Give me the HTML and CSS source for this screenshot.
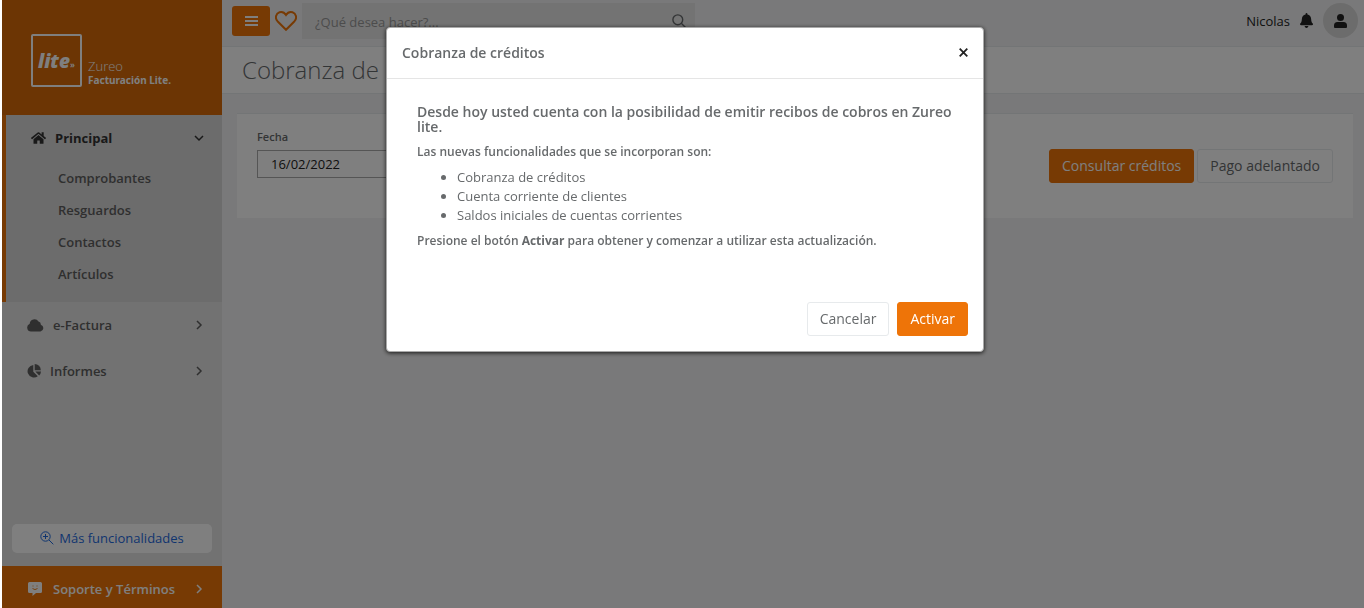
FILE: index.html
```html
<!DOCTYPE html>
<html lang="es">
<head>
    <meta charset="UTF-8">
    <meta name="viewport" content="width=device-width, initial-scale=1.0">
    <title>Cobranza de créditos</title>
    <link rel="stylesheet" href="styles.css">
</head>
<body>
    <div class="wrapper">
        <nav class="sidebar">
            <div class="brand">
                <div class="logo">
                    <span class="logo-name">lite</span><span class="logo-mark">»</span>
                </div>
                <div class="brand-text">
                    <span class="brand-company">Zureo</span>
                    <strong class="brand-product">Facturación Lite.</strong>
                </div>
            </div>

            <div class="menu-active">
                <a href="#" class="menu-link menu-principal">
                    <svg class="icon-home" width="15" height="14" viewBox="0 0 576 512" fill="currentColor"><path d="M280 148 96 300v164c0 9 7 16 16 16h112c9 0 16-7 16-16v-96c0-9 7-16 16-16h64c9 0 16 7 16 16v96c0 9 7 16 16 16h112c9 0 16-7 16-16V300L296 148a12 12 0 0 0-16 0zM572 251l-84-69V44c0-7-5-12-12-12h-56c-7 0-12 5-12 12v73l-89-74a48 48 0 0 0-61 0L4 251c-5 4-6 12-2 17l26 31c4 5 12 6 17 2L280 107c5-4 11-4 16 0l235 194c5 4 13 3 17-2l26-31c4-5 3-13-2-17z"/></svg>
                    <span>Principal</span>
                    <svg class="chevron" width="10" height="10" viewBox="0 0 10 10"><path d="M1 3l4 4 4-4"/></svg>
                </a>
                <ul class="submenu">
                    <li><a href="#">Comprobantes</a></li>
                    <li><a href="#">Resguardos</a></li>
                    <li><a href="#">Contactos</a></li>
                    <li><a href="#">Artículos</a></li>
                </ul>
            </div>

            <a href="#" class="menu-link">
                <svg width="17" height="13" viewBox="0 0 17 13" fill="currentColor"><path d="M4 12.500a4 4 0 0 1-1.300-7.700A4.800 4.800 0 0 1 11.500 2.500a3 3 0 0 1 2.300 3.200A3.500 3.500 0 0 1 13.500 12.500z"/></svg>
                <span>e-Factura</span>
                <svg class="chevron" width="10" height="10" viewBox="0 0 10 10"><path d="M3 1l4 4-4 4"/></svg>
            </a>
            <a href="#" class="menu-link">
                <svg width="14" height="14" viewBox="0 0 14 14" fill="currentColor"><path d="M6.300 1v6.700l4.500 4.500A6.300 6.300 0 1 1 6.300 1z"/><path d="M7.700 0a6.200 6.200 0 0 1 6.100 6.200H7.700z"/><path d="M8.300 7.600H14a6 6 0 0 1-1.800 3.900z"/></svg>
                <span>Informes</span>
                <svg class="chevron" width="10" height="10" viewBox="0 0 10 10"><path d="M3 1l4 4-4 4"/></svg>
            </a>

            <div class="sidebar-bottom">
                <a href="#" class="more-link">
                    <svg width="14" height="14" viewBox="0 0 14 14" fill="none" stroke="currentColor"><circle cx="5.500" cy="5.500" r="4.700"/><path d="M9 9l4.300 4.300M3 5.500h5M5.500 3v5"/></svg>
                    Más funcionalidades
                </a>
                <a href="#" class="menu-link support">
                    <svg width="14" height="14" viewBox="0 0 14 14"><path fill="currentColor" d="M1.500 0h11A1.500 1.500 0 0 1 14 1.500v8a1.500 1.500 0 0 1-1.500 1.500H8l-3.500 3v-3h-3A1.500 1.500 0 0 1 0 9.500v-8A1.500 1.500 0 0 1 1.500 0z"/><path fill="none" stroke="#ee7408" stroke-width=".9" d="M5 3.500v1M9 3.500v1M4.500 6.500q2.500 2.200 5 0"/></svg>
                    <span>Soporte y Términos</span>
                    <svg class="chevron" width="10" height="10" viewBox="0 0 10 10"><path d="M3 1l4 4-4 4"/></svg>
                </a>
            </div>
        </nav>

        <div class="page">
            <header class="topbar">
                <button type="button" class="btn-menu" aria-label="Menú">
                    <svg width="13" height="12" viewBox="0 0 13 12" stroke="currentColor" stroke-width="2"><path d="M0 2h13M0 6h13M0 10h13"/></svg>
                </button>
                <button type="button" class="btn-heart" aria-label="Favoritos">
                    <svg width="22" height="20" viewBox="0 0 22 20" fill="none" stroke="currentColor" stroke-width="2"><path d="M11 18.800 2.500 10.200C-.5 6.800 1 2.500 4.500 1.300 7.500.400 9.700 2 11 4c1.300-2 3.500-3.600 6.500-2.700 3.500 1.200 5 5.500 2 8.900z"/></svg>
                </button>
                <div class="search">
                    <input type="text" placeholder="¿Qué desea hacer?..." aria-label="Buscar">
                    <svg width="14" height="14" viewBox="0 0 14 14" fill="none" stroke="currentColor" stroke-width="1.400"><circle cx="5.800" cy="5.800" r="4.900"/><path d="M9.300 9.300l4.200 4.200"/></svg>
                </div>
                <div class="user">
                    <span>Nicolas</span>
                    <svg class="bell" width="13" height="15" viewBox="0 0 448 512" fill="currentColor"><path d="M224 512c35 0 64-29 64-64H160c0 35 29 64 64 64zm215-150c-19-20-55-52-55-154 0-78-54-140-128-155V32a32 32 0 1 0-64 0v21C118 68 64 130 64 208c0 102-36 134-55 154-6 6-9 14-9 22 0 16 13 32 32 32h384c19 0 32-16 32-32 0-8-3-16-9-22z"/></svg>
                    <a href="#" class="avatar" aria-label="Perfil">
                        <svg width="13" height="14" viewBox="0 0 13 14" fill="currentColor"><circle cx="6.500" cy="3.500" r="3.500"/><path d="M3.500 8h6A3.500 3.500 0 0 1 13 11.500V13a1 1 0 0 1-1 1H1a1 1 0 0 1-1-1v-1.500A3.500 3.500 0 0 1 3.500 8z"/></svg>
                    </a>
                </div>
            </header>

            <div class="heading">
                <h1>Cobranza de créditos</h1>
            </div>

            <main class="card">
                <div class="field">
                    <label for="fecha">Fecha</label>
                    <input type="text" id="fecha" value="16/02/2022">
                </div>
                <div class="card-actions">
                    <button type="button" class="btn btn-primary">Consultar créditos</button>
                    <button type="button" class="btn btn-white">Pago adelantado</button>
                </div>
            </main>
        </div>
    </div>

    <div class="backdrop">
        <div class="modal" role="dialog" aria-labelledby="modalTitle">
            <div class="modal-header">
                <h2 id="modalTitle">Cobranza de créditos</h2>
                <button type="button" class="close" aria-label="Cerrar">
                    <svg width="9" height="9" viewBox="0 0 9 9" stroke="currentColor" stroke-width="1.800"><path d="M.7.700l7.600 7.600M8.300.700L.7 8.300"/></svg>
                </button>
            </div>
            <div class="modal-body">
                <h3>Desde hoy usted cuenta con la posibilidad de emitir recibos de cobros en Zureo lite.</h3>
                <p>Las nuevas funcionalidades que se incorporan son:</p>
                <ul>
                    <li>Cobranza de créditos</li>
                    <li>Cuenta corriente de clientes</li>
                    <li>Saldos iniciales de cuentas corrientes</li>
                </ul>
                <p>Presione el botón <strong>Activar</strong> para obtener y comenzar a utilizar esta actualización.</p>
            </div>
            <div class="modal-footer">
                <button type="button" class="btn btn-white">Cancelar</button>
                <button type="button" class="btn btn-primary">Activar</button>
            </div>
        </div>
    </div>
</body>
</html>
```
FILE: styles.css
```css
* {
    box-sizing: border-box;
}
body {
    margin: 0;
    font-family: "Open Sans", sans-serif;
    font-size: 13px;
    color: #676a6c;
    background: #fff;
}
a {
    color: inherit;
    text-decoration: none;
}
button, input {
    font-family: inherit;
}
svg {
    flex: none;
}
.wrapper {
    display: flex;
    min-height: 100vh;
    padding-left: 2px;
}

/* sidebar */
.sidebar {
    width: 220px;
    flex: none;
    display: flex;
    flex-direction: column;
    background: #e4e4e4;
}
.brand {
    height: 115px;
    display: flex;
    align-items: flex-end;
    gap: 6px;
    padding: 0 0 28px 29px;
    background: #d86a08;
    color: #fff;
}
.logo {
    width: 51px;
    height: 53px;
    border: 2px solid #fff;
    border-radius: 2px;
    display: flex;
    align-items: center;
    justify-content: center;
}
.logo-name {
    font-family: "Noto Sans", sans-serif;
    font-size: 19px;
    line-height: 20px;
    font-weight: 900;
    font-style: italic;
}
.logo-mark {
    font-size: 8px;
    line-height: 10px;
    font-weight: 700;
    padding-top: 8px;
}
.brand-text {
    display: flex;
    flex-direction: column;
}
.brand-company {
    font-size: 13px;
    line-height: 14px;
    font-weight: 300;
}
.brand-product {
    font-family: "Noto Sans", sans-serif;
    font-size: 10px;
    line-height: 14px;
}
.menu-link {
    height: 46px;
    display: flex;
    align-items: center;
    gap: 9px;
    padding: 0 18px 0 25px;
    font-weight: 600;
    color: #5f5f5f;
}
.chevron {
    margin-left: auto;
    fill: none;
    stroke: currentColor;
    stroke-width: 1.5;
}
.menu-active {
    height: 187px;
    border-left: 4px solid #ee7408;
    background: #d8d8d8;
}
.menu-principal {
    font-weight: 700;
    color: #333;
}
.submenu {
    list-style: none;
    margin: 0;
    padding: 0 0 0 52px;
    font-weight: 600;
    color: #5f5f5f;
}
.submenu a {
    display: block;
    height: 32px;
    line-height: 34px;
}
.sidebar-bottom {
    margin-top: auto;
}
.more-link {
    height: 29px;
    margin: 0 10px 13px;
    padding-bottom: 1px;
    display: flex;
    align-items: center;
    justify-content: center;
    gap: 5px;
    border-radius: 5px;
    background: #fff;
    color: #1f6be0;
}
.support {
    gap: 11px;
    height: 42px;
    padding: 3px 18px 0 26px;
    background: #ee7408;
    color: #fff;
}

/* content */
.page {
    flex: 1;
    min-width: 0;
    background: #f3f3f4;
}
.topbar {
    height: 46px;
    display: flex;
    align-items: flex-start;
    padding: 3px 6px 0 10px;
}
.btn-menu {
    width: 38px;
    height: 30px;
    margin-top: 3px;
    padding: 0;
    border: none;
    border-radius: 3px;
    background: #ee7408;
    color: #fff;
}
.btn-menu svg {
    display: block;
    margin: auto;
}
.btn-heart {
    width: 32px;
    height: 36px;
    padding: 0;
    border: none;
    background: none;
    color: #ee7408;
}
.btn-heart svg {
    display: block;
    margin: auto;
}
.search {
    width: 393px;
    height: 36px;
    display: flex;
    align-items: center;
    padding: 0 9px 0 13px;
    background: #e6e6e6;
}
.search input {
    flex: 1;
    border: none;
    padding: 2px 0 0;
    background: none;
    font-size: 13px;
}
.search input::placeholder {
    color: #999;
}
.user {
    margin-left: auto;
    display: flex;
    align-items: center;
    gap: 10px;
    color: #222;
}
.avatar {
    width: 35px;
    height: 35px;
    border-radius: 50%;
    display: flex;
    align-items: center;
    justify-content: center;
    background: #d8d8d8;
}
.heading {
    height: 48px;
    padding: 0 20px;
    border-top: 1px solid #e7eaec;
    border-bottom: 1px solid #e7eaec;
    background: #fff;
}
.heading h1 {
    margin: 0;
    font-size: 24px;
    line-height: 45px;
    font-weight: 300;
}
.card {
    margin: 19px 11px 0 15px;
    min-height: 105px;
    display: flex;
    justify-content: space-between;
    padding: 15px 20px 20px;
    border-top: 1px solid #e7eaec;
    background: #fff;
}
.field {
    width: 250px;
    font-size: 11px;
    font-weight: 600;
}
.field label {
    display: block;
    line-height: 16px;
    margin-bottom: 5px;
}
.field input {
    width: 100%;
    height: 28px;
    padding: 0 13px;
    border: 1px solid #aaa;
    background: #fff;
    color: #222;
    font-size: 13px;
}
.card-actions {
    display: flex;
    gap: 3px;
    padding-top: 20px;
}
.btn {
    height: 34px;
    padding: 0 12px 2px;
    border: 1px solid #ee7408;
    border-radius: 3px;
    font-size: 14px;
}
.btn-primary {
    background: #ee7408;
    color: #fff;
}
.btn-white {
    border-color: #e7eaec;
    background: #fff;
    color: #676a6c;
}

/* modal */
.backdrop {
    position: fixed;
    inset: 0 0 0 2px;
    padding: 27px 0 0 4px;
    background: rgba(0, 0, 0, 0.5);
}
.modal {
    width: 598px;
    max-width: 100%;
    margin: 0 auto;
    border: 1px solid #aaa;
    border-radius: 4px;
    background: #fff;
    box-shadow: 0 1px 4px rgba(0, 0, 0, 0.8);
}
.modal-header {
    height: 51px;
    display: flex;
    align-items: center;
    justify-content: space-between;
    padding: 0 15px 2px;
    border-bottom: 1px solid #e5e5e5;
}
.modal-header h2 {
    margin: 0;
    font-size: 14px;
    font-weight: 600;
}
.close {
    display: flex;
    padding: 0;
    border: none;
    background: none;
    color: #222;
}
.modal-body {
    padding: 25px 30px 0;
}
.modal-body h3 {
    margin: 0 0 9px;
    font-size: 14px;
    line-height: 15px;
    font-weight: 600;
}
.modal-body p {
    margin: 0 0 7px;
    font-size: 12px;
    line-height: 18px;
    font-weight: 600;
}
.modal-body strong {
    font-weight: 700;
}
.modal-body ul {
    margin: 0 0 7px;
    padding-left: 40px;
    line-height: 19px;
}
.modal-footer {
    display: flex;
    justify-content: flex-end;
    gap: 8px;
    padding: 45px 15px 15px;
}
```
